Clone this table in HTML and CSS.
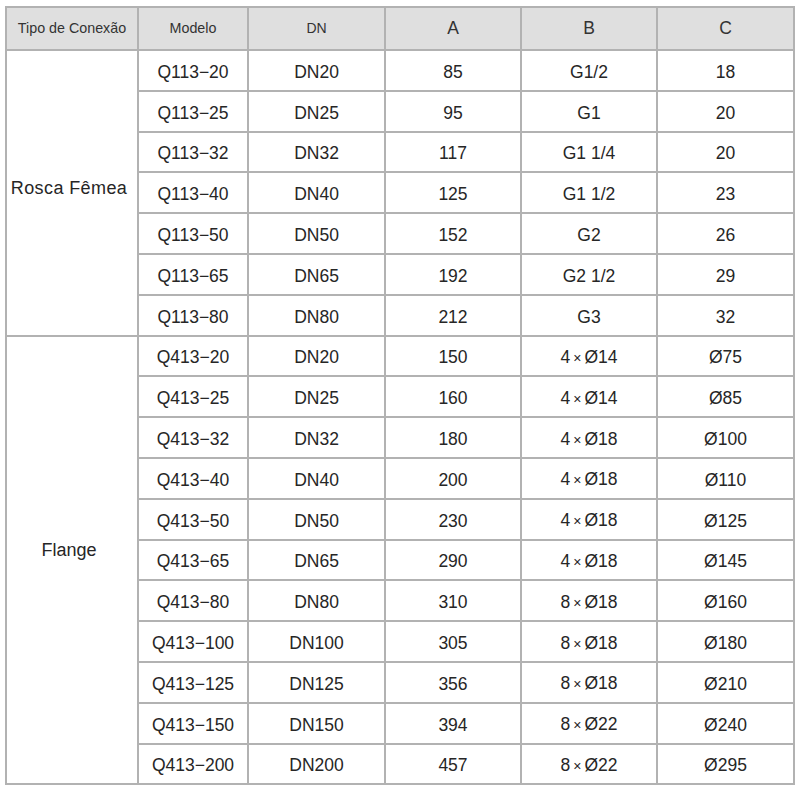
FILE: index.html
```html
<!DOCTYPE html>
<html lang="pt">
<head>
<meta charset="utf-8">
<title>Tabela</title>
<link rel="stylesheet" href="styles.css">
</head>
<body>
<table class="spec">
  <colgroup>
    <col class="c1"><col class="c2"><col class="c3"><col class="c4"><col class="c5"><col class="c6">
  </colgroup>
  <thead>
    <tr class="head-row">
      <th class="h-tipo">Tipo de Conexão</th>
      <th class="h-modelo">Modelo</th>
      <th class="h-dn">DN</th>
      <th class="h-big">A</th>
      <th class="h-big">B</th>
      <th class="h-big">C</th>
    </tr>
  </thead>
  <tbody>
    <tr><td class="group rosca" rowspan="7">Rosca Fêmea</td><td>Q113−20</td><td>DN20</td><td>85</td><td>G1/2</td><td>18</td></tr>
    <tr><td>Q113−25</td><td>DN25</td><td>95</td><td>G1</td><td>20</td></tr>
    <tr><td>Q113−32</td><td>DN32</td><td>117</td><td>G1 1/4</td><td>20</td></tr>
    <tr><td>Q113−40</td><td>DN40</td><td>125</td><td>G1 1/2</td><td>23</td></tr>
    <tr><td>Q113−50</td><td>DN50</td><td>152</td><td>G2</td><td>26</td></tr>
    <tr><td>Q113−65</td><td>DN65</td><td>192</td><td>G2 1/2</td><td>29</td></tr>
    <tr><td>Q113−80</td><td>DN80</td><td>212</td><td>G3</td><td>32</td></tr>
    <tr><td class="group flange" rowspan="11">Flange</td><td>Q413−20</td><td>DN20</td><td>150</td><td>4<span class="x">×</span>Ø14</td><td>Ø75</td></tr>
    <tr><td>Q413−25</td><td>DN25</td><td>160</td><td>4<span class="x">×</span>Ø14</td><td>Ø85</td></tr>
    <tr><td>Q413−32</td><td>DN32</td><td>180</td><td>4<span class="x">×</span>Ø18</td><td>Ø100</td></tr>
    <tr><td>Q413−40</td><td>DN40</td><td>200</td><td>4<span class="x">×</span>Ø18</td><td>Ø110</td></tr>
    <tr><td>Q413−50</td><td>DN50</td><td>230</td><td>4<span class="x">×</span>Ø18</td><td>Ø125</td></tr>
    <tr><td>Q413−65</td><td>DN65</td><td>290</td><td>4<span class="x">×</span>Ø18</td><td>Ø145</td></tr>
    <tr><td>Q413−80</td><td>DN80</td><td>310</td><td>8<span class="x">×</span>Ø18</td><td>Ø160</td></tr>
    <tr><td>Q413−100</td><td>DN100</td><td>305</td><td>8<span class="x">×</span>Ø18</td><td>Ø180</td></tr>
    <tr><td>Q413−125</td><td>DN125</td><td>356</td><td>8<span class="x">×</span>Ø18</td><td>Ø210</td></tr>
    <tr><td>Q413−150</td><td>DN150</td><td>394</td><td>8<span class="x">×</span>Ø22</td><td>Ø240</td></tr>
    <tr><td>Q413−200</td><td>DN200</td><td>457</td><td>8<span class="x">×</span>Ø22</td><td>Ø295</td></tr>
  </tbody>
</table>
</body>
</html>
```
FILE: styles.css
```css
html, body {
  margin: 0;
  padding: 0;
  background: #ffffff;
}
body {
  padding: 6px 0 0 5px;
  font-family: "Liberation Sans", Arial, sans-serif;
  color: #262626;
}
.spec {
  border-collapse: collapse;
  table-layout: fixed;
  width: 788px;
}
.c1 { width: 132px; }
.c2 { width: 110px; }
.c3 { width: 137px; }
.c4 { width: 136px; }
.c5 { width: 136px; }
.c6 { width: 137px; }
.spec th,
.spec td {
  border: 2px solid #b2b2b2;
  text-align: center;
  vertical-align: middle;
  padding: 0;
  white-space: nowrap;
  line-height: 20px;
}
.head-row {
  height: 43px;
}
.spec tbody tr {
  height: 40.8px;
}
.spec th {
  background: #dfdfdf;
  font-weight: normal;
  color: #333333;
  padding-bottom: 2px;
}
.h-tipo { font-size: 14.3px; }
.h-modelo { font-size: 14.3px; }
.h-dn { font-size: 14px; padding-top: 3px; }
.h-big { font-size: 17.5px; padding-top: 3px; }
.spec td {
  font-size: 17.5px;
  padding-top: 3px;
}
.spec td.group {
  font-size: 18px;
  padding-top: 0;
  padding-right: 6px;
}
.spec td.rosca {
  letter-spacing: 0.4px;
  padding-bottom: 10px;
}
.spec td.flange {
  padding-bottom: 20px;
}
.x {
  font-size: 14px;
  margin: 0 3px;
}
```
